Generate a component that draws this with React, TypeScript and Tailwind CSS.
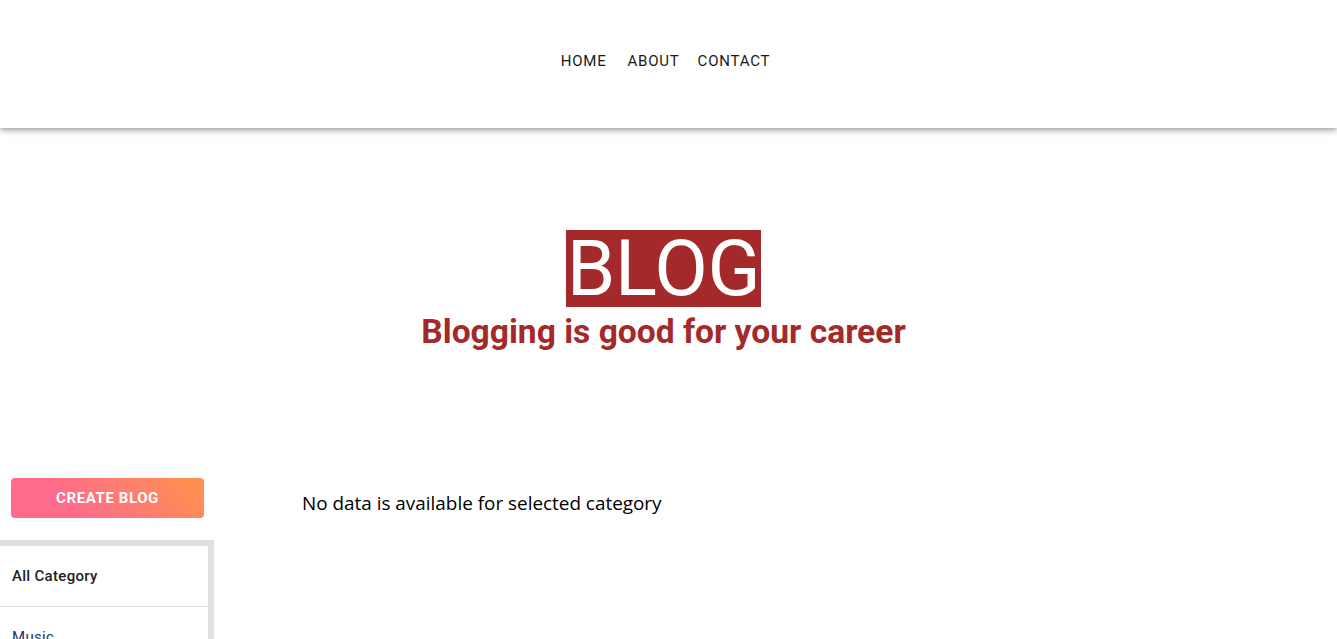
export default function App() {
  const navItems = ['Home', 'About', 'Contact']

  return (
    <div className="min-h-[639px] bg-white font-['Roboto',sans-serif] overflow-hidden">
      {/* Header */}
      <header className="h-[128px] bg-white shadow-[0_2px_4px_-1px_rgba(0,0,0,0.2),0_4px_5px_0_rgba(0,0,0,0.14),0_1px_10px_0_rgba(0,0,0,0.12)] flex items-center justify-center relative z-10">
        <nav className="flex items-center pl-[12px] -mt-[6px]">
          {navItems.map((item, i) => (
            <a
              key={item}
              href="#"
              className={`text-[15px] font-normal uppercase tracking-[0.8px] text-[#1a1a1a] ${i === 0 ? 'mr-[21px]' : 'mr-[18px]'}`}
            >
              {item}
            </a>
          ))}
        </nav>
      </header>

      {/* Hero */}
      <section className="flex flex-col items-center pt-[102px] h-[334px] pr-[10px]">
        <div className="bg-[#a3292a] h-[77px] w-[195px] flex items-center justify-center">
          <span className="text-white text-[78px] leading-none font-normal tracking-[-0.3px]">BLOG</span>
        </div>
        <h2 className="text-[#a3292a] text-[33.6px] font-bold leading-[48px] mt-[1px]">
          Blogging is good for your career
        </h2>
      </section>

      {/* Content */}
      <div className="flex">
        <aside className="w-[214px] shrink-0 flex flex-col">
          <div className="pl-[11px] pr-[10px] pt-[16px]">
            <button className="w-[193px] h-[40px] rounded-[4px] bg-[linear-gradient(45deg,#fe6b8b_30%,#ff8e53_90%)] text-white text-[15px] font-bold uppercase tracking-[0.6px]">
              Create Blog
            </button>
          </div>
          <div className="mt-[22px] border-t-[6px] border-r-[6px] border-[#e0e0e0] w-[214px]">
            <div className="h-[61px] flex items-center pl-[12px] border-b border-[#e0e0e0] text-[15px] font-medium tracking-[0.3px] text-[#222222]">
              All Category
            </div>
            <div className="h-[61px] flex items-center pl-[12px] text-[15px] tracking-[0.3px] text-[#1f2f5f]">
              Music
            </div>
          </div>
        </aside>
        <main className="pl-[88px] pt-[27px]">
          <p className="font-['Open_Sans',sans-serif] text-[18.9px] text-black">
            No data is available for selected category
          </p>
        </main>
      </div>
    </div>
  )
}
